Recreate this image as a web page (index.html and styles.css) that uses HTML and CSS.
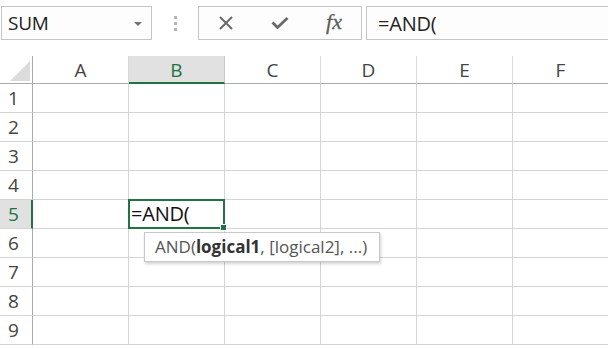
FILE: index.html
```html
<!DOCTYPE html>
<html>
<head>
<meta charset="utf-8">
<link rel="stylesheet" href="styles.css">
</head>
<body>
<div class="toolbar">
  <div class="namebox">
    <span class="name">SUM</span>
    <span class="caret"></span>
  </div>
  <div class="grip"><i></i><i></i><i></i></div>
  <div class="buttons">
    <span class="btn">
      <svg width="16" height="16" viewBox="0 0 16 16"><path d="M2 2 L14 14 M14 2 L2 14" stroke="#6a6a6a" stroke-width="2" fill="none"/></svg>
    </span>
    <span class="btn">
      <svg width="18" height="12" viewBox="0 0 18 12"><path d="M1.5 5.5 L6.5 10.5 L16.5 1" stroke="#6a6a6a" stroke-width="2.8" fill="none"/></svg>
    </span>
    <span class="btn fx">fx</span>
  </div>
  <div class="formula">=AND(</div>
</div>

<div class="sheet">
  <div class="corner"><span class="tri"></span></div>
  <div class="colh">A</div>
  <div class="colh sel">B</div>
  <div class="colh">C</div>
  <div class="colh">D</div>
  <div class="colh">E</div>
  <div class="colh">F</div>

  <div class="rowh">1</div><div class="cell"></div><div class="cell"></div><div class="cell"></div><div class="cell"></div><div class="cell"></div><div class="cell"></div>
  <div class="rowh">2</div><div class="cell"></div><div class="cell"></div><div class="cell"></div><div class="cell"></div><div class="cell"></div><div class="cell"></div>
  <div class="rowh">3</div><div class="cell"></div><div class="cell"></div><div class="cell"></div><div class="cell"></div><div class="cell"></div><div class="cell"></div>
  <div class="rowh">4</div><div class="cell"></div><div class="cell"></div><div class="cell"></div><div class="cell"></div><div class="cell"></div><div class="cell"></div>
  <div class="rowh sel">5</div><div class="cell"></div>
  <div class="cell active">
    <div class="editor">=AND(<span class="handle"></span></div>
    <div class="tip">AND(<b>logical1</b>, [logical2], ...)</div>
  </div>
  <div class="cell"></div><div class="cell"></div><div class="cell"></div><div class="cell"></div>
  <div class="rowh">6</div><div class="cell"></div><div class="cell"></div><div class="cell"></div><div class="cell"></div><div class="cell"></div><div class="cell"></div>
  <div class="rowh">7</div><div class="cell"></div><div class="cell"></div><div class="cell"></div><div class="cell"></div><div class="cell"></div><div class="cell"></div>
  <div class="rowh">8</div><div class="cell"></div><div class="cell"></div><div class="cell"></div><div class="cell"></div><div class="cell"></div><div class="cell"></div>
  <div class="rowh">9</div><div class="cell"></div><div class="cell"></div><div class="cell"></div><div class="cell"></div><div class="cell"></div><div class="cell"></div>
</div>
</body>
</html>
```

FILE: styles.css
```css
html, body {
  margin: 0;
  padding: 0;
  background: #ffffff;
  width: 608px;
  height: 348px;
  overflow: hidden;
  font-family: "Open Sans", "Noto Sans", sans-serif;
}

.toolbar {
  display: flex;
  align-items: stretch;
  height: 34px;
  padding: 6px 0 0 1px;
  margin-bottom: 16px;
}

.namebox {
  border: 1px solid #c6c6c6;
  background: #fdfdfd;
  display: flex;
  align-items: center;
  justify-content: space-between;
  padding: 0 9px 0 6px;
  box-sizing: border-box;
  width: 151px;
}

.name {
  font-size: 19px;
  color: #222;
  letter-spacing: -0.2px;
}

.caret {
  width: 0;
  height: 0;
  border-left: 4px solid transparent;
  border-right: 4px solid transparent;
  border-top: 4px solid #707070;
  margin-top: 1px;
}

.grip {
  width: 46px;
  display: flex;
  flex-direction: column;
  align-items: center;
  justify-content: center;
  gap: 3px;
}

.grip i {
  display: block;
  width: 3px;
  height: 3px;
  background: #b4b4b4;
}

.buttons {
  width: 164px;
  box-sizing: border-box;
  border: 1px solid #c6c6c6;
  background: #fdfdfd;
  display: flex;
  align-items: center;
  padding-left: 0;
}

.btn {
  width: 54px;
  height: 32px;
  display: flex;
  align-items: center;
  justify-content: center;
}

.fx {
  font-family: "Liberation Serif", "DejaVu Serif", serif;
  font-style: italic;
  font-size: 22px;
  color: #5e5e5e;
  padding-bottom: 2px;
  -webkit-text-stroke: 0.3px #5e5e5e;
}

.formula {
  flex: 1;
  margin-left: 4px;
  border: 1px solid #c6c6c6;
  border-right: none;
  background: #fdfdfd;
  display: flex;
  align-items: center;
  padding-left: 11px;
  font-size: 20px;
  color: #222;
  letter-spacing: -0.2px;
}

.sheet {
  display: grid;
  grid-template-columns: 33px repeat(6, 96px);
  grid-template-rows: 28px repeat(9, 29px);
}

.corner {
  border-right: 1px solid #ababab;
  border-bottom: 1px solid #ababab;
  position: relative;
}

.tri {
  position: absolute;
  right: 2px;
  bottom: 2px;
  width: 0;
  height: 0;
  border-left: 20px solid transparent;
  border-bottom: 20px solid #dcdcdc;
}

.colh {
  border-right: 1px solid #dadada;
  border-bottom: 1px solid #ababab;
  display: flex;
  align-items: center;
  justify-content: center;
  font-size: 19px;
  color: #444;
  padding-top: 1px;
}

.colh.sel {
  background: #e1e1e1;
  color: #217346;
  border-bottom: 2px solid #217346;
  border-right-color: #c8c8c8;
}

.rowh {
  border-right: 1px solid #ababab;
  border-bottom: 1px solid #d4d4d4;
  display: flex;
  align-items: center;
  padding-left: 8px;
  font-size: 19px;
  color: #444;
}

.rowh.sel {
  background: #e1e1e1;
  color: #217346;
  border-right: 2px solid #217346;
}

.cell {
  border-right: 1px solid #d4d4d4;
  border-bottom: 1px solid #d4d4d4;
}

.cell.active {
  position: relative;
}

.editor {
  position: absolute;
  left: -1px;
  top: -1px;
  width: 97px;
  height: 30px;
  box-sizing: border-box;
  border: 2px solid #217346;
  background: #fff;
  font-size: 20px;
  color: #111;
  line-height: 26px;
  padding-left: 1px;
  letter-spacing: -0.2px;
  z-index: 2;
}

.handle {
  position: absolute;
  right: -4px;
  bottom: -4px;
  width: 5px;
  height: 5px;
  background: #217346;
  border: 1px solid #fff;
}

.tip {
  position: absolute;
  left: 15px;
  top: 32px;
  width: 236px;
  height: 30px;
  box-sizing: border-box;
  border: 1px solid #c8c8c8;
  background: #fff;
  box-shadow: 1px 2px 3px rgba(0,0,0,0.18);
  font-size: 17px;
  color: #555;
  padding-left: 10px;
  line-height: 28px;
  white-space: nowrap;
  z-index: 3;
}

.tip b {
  color: #333;
  font-weight: 700;
}
```
